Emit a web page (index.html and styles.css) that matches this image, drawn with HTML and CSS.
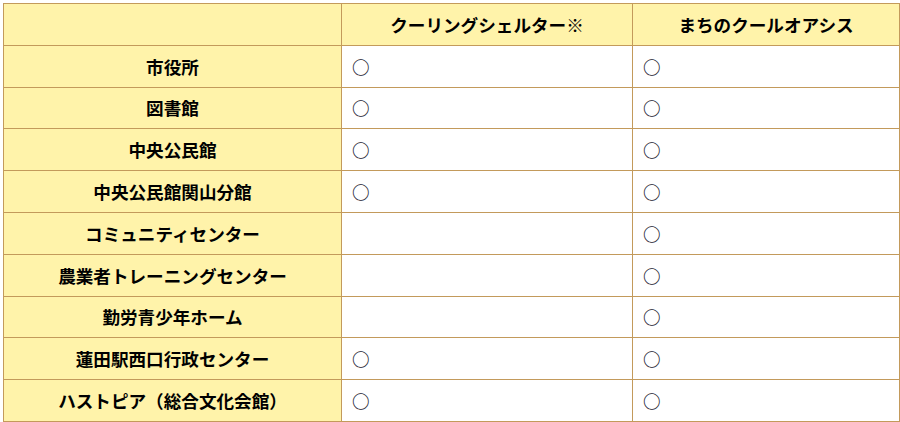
FILE: index.html
```html
<!DOCTYPE html>
<html lang="ja">
<head>
<meta charset="utf-8">
<link rel="stylesheet" href="styles.css">
</head>
<body>
<table class="tbl">
  <colgroup>
    <col class="c1"><col class="c2"><col class="c3">
  </colgroup>
  <thead>
    <tr><th class="corner"></th><th>クーリングシェルター※</th><th>まちのクールオアシス</th></tr>
  </thead>
  <tbody>
    <tr><th>市役所</th><td>○</td><td>○</td></tr>
    <tr><th>図書館</th><td>○</td><td>○</td></tr>
    <tr><th>中央公民館</th><td>○</td><td>○</td></tr>
    <tr><th>中央公民館関山分館</th><td>○</td><td>○</td></tr>
    <tr><th>コミュニティセンター</th><td></td><td>○</td></tr>
    <tr><th>農業者トレーニングセンター</th><td></td><td>○</td></tr>
    <tr><th>勤労青少年ホーム</th><td></td><td>○</td></tr>
    <tr><th>蓮田駅西口行政センター</th><td>○</td><td>○</td></tr>
    <tr><th>ハストピア（総合文化会館）</th><td>○</td><td>○</td></tr>
  </tbody>
</table>
</body>
</html>
```
FILE: styles.css
```css
html, body {
  margin: 0;
  padding: 0;
  background: #ffffff;
}
body {
  padding: 3px 2px 0 3px;
  font-family: "Noto Sans CJK JP", "Noto Sans", sans-serif;
  color: #000000;
}
.tbl {
  border-collapse: collapse;
  width: 896px;
  table-layout: fixed;
}
.c1 { width: 338px; }
.c2 { width: 291px; }
.c3 { width: 267px; }
.tbl th, .tbl td {
  border: 1px solid #c39a5b;
  height: 40.8px;
  padding: 0 10px;
  font-size: 17.6px;
  line-height: 1.2;
}
.tbl th {
  background: #fff3aa;
  font-weight: bold;
  text-align: center;
}
.tbl td {
  background: #ffffff;
  text-align: left;
  font-weight: bold;
  color: #1a2230;
}
```
